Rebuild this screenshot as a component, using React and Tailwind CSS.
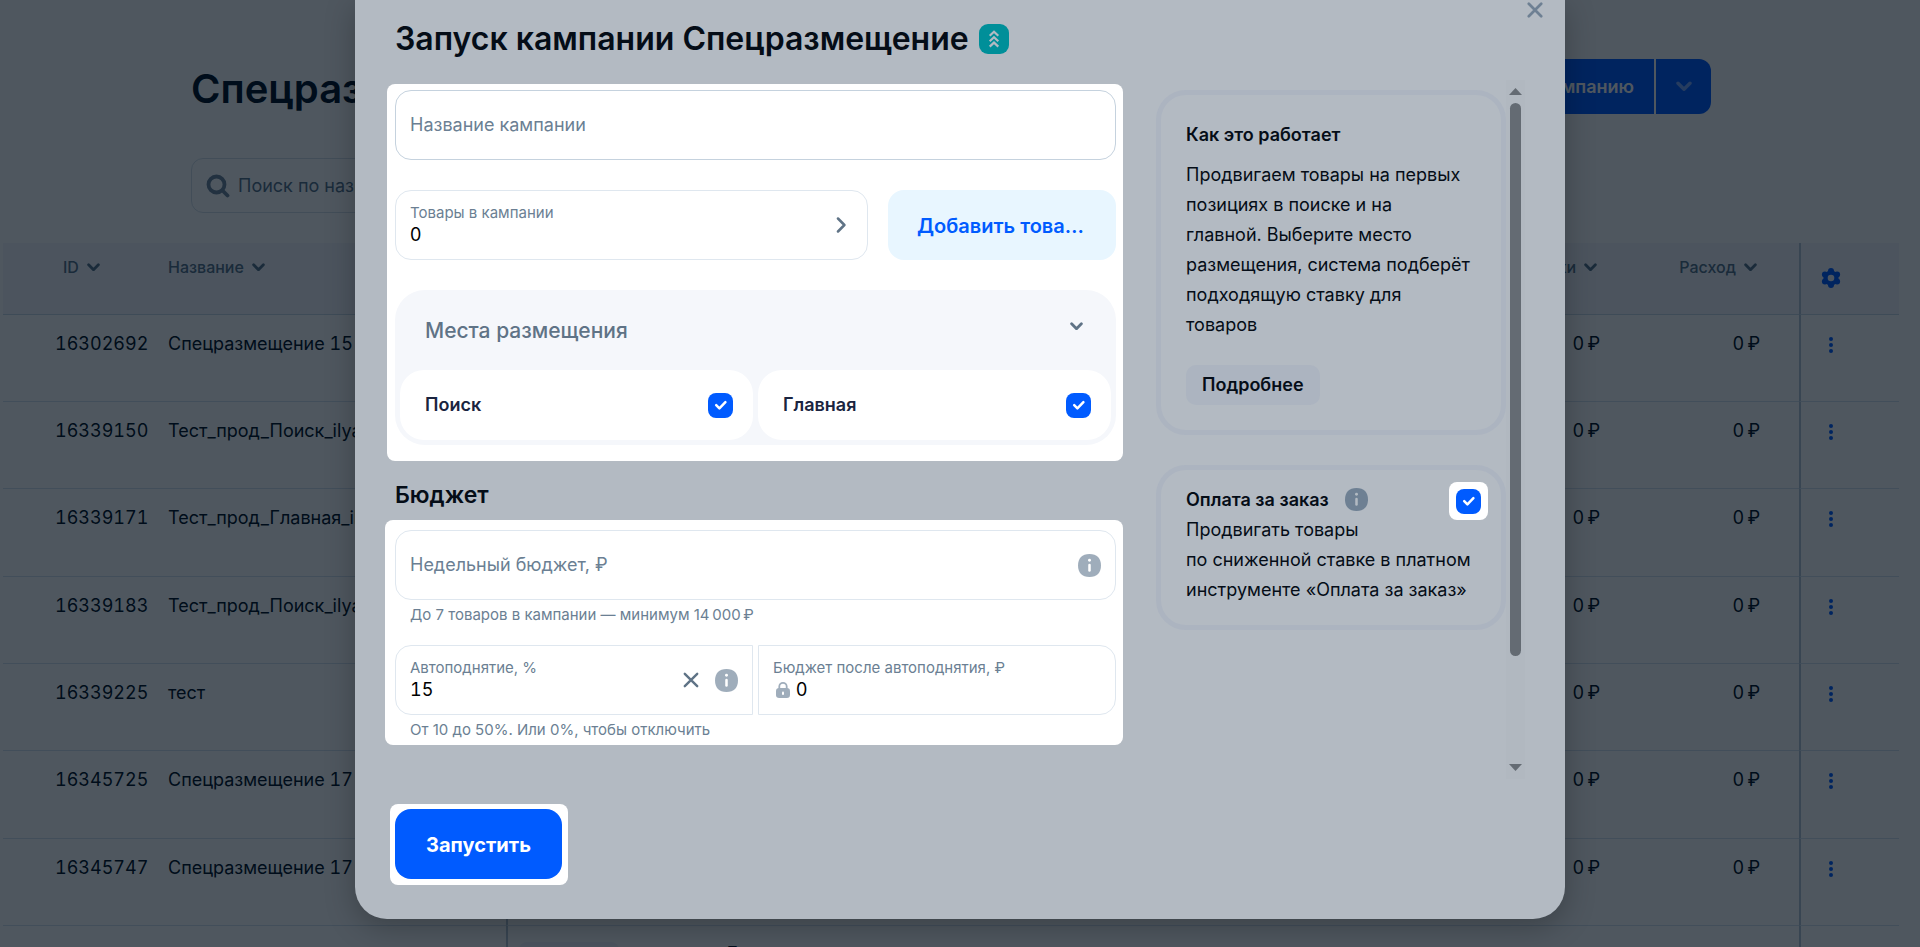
import { useState } from 'react';

const campaigns = [
    { id: '16302692', name: 'Спецразмещение 15 января' },
    { id: '16339150', name: 'Тест_прод_Поиск_ilya' },
    { id: '16339171', name: 'Тест_прод_Главная_ilya' },
    { id: '16339183', name: 'Тест_прод_Поиск_ilya' },
    { id: '16339225', name: 'тест' },
    { id: '16345725', name: 'Спецразмещение 17 января' },
    { id: '16345747', name: 'Спецразмещение 17 января' },
    { id: '16345801', name: 'Спецразмещение 17 января' },
];

function Chevron({ className = '' }) {
    return (
        <svg viewBox="0 0 12 8" className={className} fill="none" stroke="currentColor" strokeWidth="2.6" strokeLinecap="round" strokeLinejoin="round" aria-hidden="true">
            <path d="M1.5 1.7 6 6.2l4.5-4.5" />
        </svg>
    );
}

function Cross({ className = '', strokeWidth = 2 }) {
    return (
        <svg viewBox="0 0 16 16" className={className} fill="none" stroke="currentColor" strokeWidth={strokeWidth} strokeLinecap="round" aria-hidden="true">
            <path d="m1.8 1.8 12.4 12.4M14.2 1.8 1.8 14.2" />
        </svg>
    );
}

function InfoIcon({ className = '', mark = '#ffffff' }) {
    return (
        <svg viewBox="0 0 22 22" className={className} aria-hidden="true">
            <path d="M11 0c7.2 0 11 4.200 11 11s-3.800 11-11 11S0 17.800 0 11 3.800 0 11 0Z" fill="currentColor" />
            <circle cx="11" cy="6" r="1.4" fill={mark} />
            <rect x="9.8" y="9.4" width="2.4" height="7.6" rx="1.2" fill={mark} />
        </svg>
    );
}

function Checkbox({ id, checked, onChange }) {
    return (
        <span className="relative flex size-[25px] shrink-0">
            <input id={id} type="checkbox" checked={checked} onChange={onChange} className="size-full cursor-pointer appearance-none rounded-lg bg-[#c8d2dc] checked:bg-[#005bff]" />
            {checked && (
                <svg viewBox="0 0 25 25" className="pointer-events-none absolute inset-0" fill="none" stroke="#fff" strokeWidth="2.5" strokeLinecap="round" strokeLinejoin="round" aria-hidden="true">
                    <path d="m8.2 12.2 3.2 3.2 6-6.2" />
                </svg>
            )}
        </span>
    );
}

function CampaignsPage() {
    return (
        <div className="h-full overflow-hidden bg-white text-[#001024]">
            <header className="flex h-[158px] items-start justify-between pl-[191px] pr-[209px] pt-[59px]">
                <h1 className="text-[40px] font-semibold leading-[60px]">Спецразмещение</h1>
                <div className="flex gap-[2px] text-white">
                    <button className="h-[55px] rounded-l-xl bg-[#005bff] px-5 text-lg font-semibold">Создать кампанию</button>
                    <button aria-label="Ещё варианты" className="flex h-[55px] w-[55px] items-center justify-center rounded-r-xl bg-[#005bff] text-[#7aa8ff]">
                        <Chevron className="w-4" />
                    </button>
                </div>
            </header>
            <div className="ml-[191px] flex h-[55px] w-[500px] items-center gap-2 rounded-xl border border-[#d5dfe9] px-3.5">
                <svg viewBox="0 0 24 24" className="size-6 text-[#6f859b]" fill="none" stroke="currentColor" strokeWidth="3.8" strokeLinecap="round" aria-hidden="true">
                    <circle cx="10.5" cy="10.5" r="8" />
                    <path d="m17 17 4.5 4.5" />
                </svg>
                <input aria-label="Поиск" placeholder="Поиск по названию" className="flex-1 bg-transparent text-lg outline-none placeholder:text-[#557089]" />
            </div>
            <div className="mt-[30px] pl-[3px] pr-[21px]">
                <table className="w-full table-fixed border-separate border-spacing-0">
                    <colgroup>
                        <col className="w-[165px]" />
                        <col className="w-[338px]" />
                        <col />
                        <col className="w-[160px]" />
                        <col className="w-[160px]" />
                        <col className="w-[100px]" />
                    </colgroup>
                    <thead>
                        <tr className="h-[72px] text-left align-top text-base leading-[48px] text-[#557089] *:whitespace-nowrap *:border-b *:border-b-[#c9d9e6] *:bg-[#f4f6fb] *:p-0 *:font-medium">
                            <th><span className="flex items-center gap-2 pl-[60px]">ID <Chevron className="w-[13px]" /></span></th>
                            <th><span className="flex items-center gap-2">Название <Chevron className="w-[13px]" /></span></th>
                            <th className="border-l-2 border-l-[#b4c6d6]" />
                            <th><span className="flex items-center justify-end gap-2 pr-[42px]">Клики <Chevron className="w-[13px]" /></span></th>
                            <th><span className="flex items-center justify-end gap-2 pr-[42px]">Расход <Chevron className="w-[13px]" /></span></th>
                            <th className="border-l-2 border-l-[#b4c6d6]">
                                <button aria-label="Настройки таблицы" className="ml-5 mt-[25px] flex text-[#005bff]">
                                    <svg viewBox="0 0 20 20" className="size-5" fill="currentColor" aria-hidden="true">
                                        <circle cx="10" cy="10" r="7.6" />
                                        <circle cx="10" cy="3" r="3" />
                                        <circle cx="10" cy="17" r="3" />
                                        <circle cx="3.9" cy="6.5" r="3" />
                                        <circle cx="16.1" cy="6.5" r="3" />
                                        <circle cx="3.9" cy="13.5" r="3" />
                                        <circle cx="16.1" cy="13.5" r="3" />
                                        <circle cx="10" cy="10" r="3.3" fill="#f4f6fb" />
                                    </svg>
                                </button>
                            </th>
                        </tr>
                    </thead>
                    <tbody>
                        {campaigns.map(c => (
                            <tr key={c.id} className="h-[87px] align-top text-lg leading-[30px] tabular-nums nth-[3n]:h-[88px] *:whitespace-nowrap *:border-b *:border-b-[#d5e2ed] *:px-0 *:pb-0 *:pt-[14px]">
                                <td><span className="block pl-[52px]">{c.id}</span></td>
                                <td>{c.name}</td>
                                <td className="border-l-2 border-l-[#b4c6d6]">
                                    <div className="flex pl-[11px] pt-0.5">
                                        <span className="w-[100px] rounded-lg bg-[#f0f3fa] text-center text-base leading-[30px]">Активна</span>
                                        <span className="ml-[108px] font-semibold leading-6">Бюджет</span>
                                    </div>
                                </td>
                                <td><span className="block pr-[39px] text-right">{'0\u2009₽'}</span></td>
                                <td><span className="block pr-[39px] text-right">{'0\u2009₽'}</span></td>
                                <td className="border-l-2 border-l-[#b4c6d6]">
                                    <button aria-label={`Действия ${c.id}`} className="ml-5 flex h-8 w-5 items-center justify-center text-[#005bff]">
                                        <svg viewBox="0 0 4 16" className="h-4 w-1" fill="currentColor" aria-hidden="true">
                                            <circle cx="2" cy="2" r="2" />
                                            <circle cx="2" cy="8" r="2" />
                                            <circle cx="2" cy="14" r="2" />
                                        </svg>
                                    </button>
                                </td>
                            </tr>
                        ))}
                    </tbody>
                </table>
            </div>
        </div>
    );
}

function PlacementOption({ id, label, checked, onChange }) {
    return (
        <div className="flex h-[70px] flex-1 items-center justify-between rounded-3xl bg-white pl-[25px] pr-5">
            <label htmlFor={id} className="text-lg font-semibold text-[#1a2440]">{label}</label>
            <Checkbox id={id} checked={checked} onChange={onChange} />
        </div>
    );
}

function LaunchModal() {
    const [places, setPlaces] = useState({ search: true, main: true });
    const [payPerOrder, setPayPerOrder] = useState(true);
    const [raise, setRaise] = useState('15');

    return (
        <div role="dialog" aria-modal="true" aria-labelledby="launch-title" className="relative w-[1210px] max-w-full rounded-b-[32px] bg-[#b3bac2] px-10 pb-10 text-[#050d17] shadow-[0_8px_30px_rgba(0,0,0,0.25)]">
            <button aria-label="Закрыть" className="absolute right-[22px] top-0.5 text-[#6e8093]">
                <Cross className="size-4" strokeWidth={2.7} />
            </button>
            <div className="flex h-20 items-center gap-2.5 pb-0.5">
                <h2 id="launch-title" className="text-[32px] font-semibold leading-10">Запуск кампании Спецразмещение</h2>
                <svg viewBox="0 0 30 30" className="size-[30px]" aria-hidden="true">
                    <rect width="30" height="30" rx="9" fill="#008f99" />
                    <path d="m10.7 11.8 4.3-4 4.3 4M10.7 17.2l4.3-4 4.3 4M10.7 22.6l4.3-4 4.3 4" fill="none" stroke="#b3bac2" strokeWidth="2.2" />
                </svg>
            </div>

            <div className="flex h-[699px]">
                <div className="min-w-0 flex-1 pt-1">
                    <section className="-ml-2 -mr-[7px] rounded-lg bg-white pb-4 pl-2 pr-[7px] pt-[6px]">
                        <input aria-label="Название кампании" placeholder="Название кампании" className="block h-[70px] w-full rounded-2xl border border-[#c5d2de] px-[14px] pb-[2px] text-lg outline-none placeholder:text-[#6b7f93]" />
                        <div className="mt-[30px] flex gap-5">
                            <button className="flex h-[70px] flex-1 items-center justify-between rounded-2xl border border-[#dfe7ef] pl-[14px] pr-[21px] text-left">
                                <span className="block pb-0.5">
                                    <span className="block text-[15px] leading-[22px] text-[#6b7f93]">Товары в кампании</span>
                                    <span className="block text-lg leading-[22px] text-black">0</span>
                                </span>
                                <svg viewBox="0 0 10 16" className="h-4 w-2.5 text-[#5f7386]" fill="none" stroke="currentColor" strokeWidth="2.5" strokeLinecap="round" strokeLinejoin="round" aria-hidden="true">
                                    <path d="m2 1.5 6.4 6.5L2 14.5" />
                                </svg>
                            </button>
                            <button className="h-[70px] w-[228px] truncate rounded-2xl bg-[#e8f6ff] px-[29px] pt-0.5 text-xl font-semibold text-[#005bff]">Добавить товары</button>
                        </div>
                        <div className="mt-[30px] rounded-[30px] bg-[#f5f7fb] px-[5px] pb-[5px]">
                            <button className="flex h-20 w-full items-center justify-between pl-[25px] pr-7 text-[#5f7386]">
                                <span className="pt-0.5 text-[21px] font-medium">Места размещения</span>
                                <Chevron className="mb-2 w-[13px]" />
                            </button>
                            <div className="flex gap-[5px]">
                                <PlacementOption id="place-search" label="Поиск" checked={places.search} onChange={e => setPlaces({ ...places, search: e.target.checked })} />
                                <PlacementOption id="place-main" label="Главная" checked={places.main} onChange={e => setPlaces({ ...places, main: e.target.checked })} />
                            </div>
                        </div>
                    </section>

                    <h3 className="pb-[9px] pt-[18px] text-[23px] font-semibold leading-8">Бюджет</h3>

                    <section className="-ml-2.5 -mr-[7px] rounded-lg bg-white pb-1 pl-2.5 pr-[7px] pt-2.5">
                        <div className="flex h-[70px] items-center rounded-2xl border border-[#dfe7ef] px-[14px]">
                            <input aria-label="Недельный бюджет, ₽" placeholder="Недельный бюджет, ₽" className="min-w-0 flex-1 text-lg outline-none placeholder:text-[#6b7f93]" />
                            <InfoIcon className="size-[23px] text-[#9fadbb]" />
                        </div>
                        <p className="pl-[15px] pt-1 text-[15px] leading-[22px] text-[#6b7f93]">{'До 7 товаров в кампании — минимум 14\u2009000\u2009₽'}</p>
                        <div className="mt-[19px] flex gap-[5px]">
                            <div className="flex h-[70px] flex-1 items-center rounded-l-2xl border border-[#dfe7ef] px-[14px]">
                                <div className="min-w-0 flex-1 pb-0.5">
                                    <label htmlFor="raise" className="block text-[15px] leading-[22px] text-[#6b7f93]">Автоподнятие, %</label>
                                    <input id="raise" value={raise} onChange={e => setRaise(e.target.value)} className="block h-[22px] w-full text-lg tabular-nums text-black outline-none" />
                                </div>
                                <button aria-label="Очистить" onClick={() => setRaise('')} className="mr-4 text-[#5f7386]">
                                    <Cross className="size-4" strokeWidth={2.4} />
                                </button>
                                <InfoIcon className="size-[23px] text-[#9fadbb]" />
                            </div>
                            <div className="flex h-[70px] flex-1 flex-col justify-center rounded-r-2xl border border-[#dfe7ef] px-[14px] pb-0.5">
                                <label htmlFor="after" className="block text-[15px] leading-[22px] text-[#6b7f93]">Бюджет после автоподнятия, ₽</label>
                                <div className="flex items-center gap-1.5 pl-[3px]">
                                    <svg viewBox="0 0 14 16" className="h-4 w-3.5 text-[#9fadbb]" aria-hidden="true">
                                        <path d="M3.3 8V4.6a3.7 3.7 0 0 1 7.4 0V8" fill="none" stroke="currentColor" strokeWidth="1.8" />
                                        <rect y="6" width="14" height="10" rx="3.2" fill="currentColor" />
                                        <rect x="6" y="9.5" width="2" height="3.5" rx="1" fill="#fff" />
                                    </svg>
                                    <input id="after" value="0" readOnly className="block h-[22px] min-w-0 flex-1 text-lg text-black outline-none" />
                                </div>
                            </div>
                        </div>
                        <p className="pl-[15px] pt-1 text-[15px] leading-[22px] text-[#6b7f93]">От 10 до 50%. Или 0%, чтобы отключить</p>
                    </section>
                </div>

                <aside className="ml-10 w-[350px] shrink-0 pt-2.5 text-lg leading-[30px]">
                    <section className="rounded-[30px] border-[5px] border-[#acb4c0] p-[25px]">
                        <h4 className="font-semibold">Как это работает</h4>
                        <p className="-mr-2 mt-2.5">Продвигаем товары на первых<br />позициях в поиске и на<br />главной. Выберите место<br />размещения, система подберёт<br />подходящую ставку для<br />товаров</p>
                        <button className="mt-[25px] h-10 rounded-[10px] bg-[#acb4c0] px-4 font-semibold">Подробнее</button>
                    </section>
                    <section className="mt-[30px] rounded-[30px] border-[5px] border-[#acb4c0] pb-5 pl-[25px] pr-[13px] pt-3">
                        <div className="flex h-[38px] items-center">
                            <label htmlFor="pay-order" className="pb-[3px] font-semibold">Оплата за заказ</label>
                            <InfoIcon className="mb-[3px] ml-4 size-[23px] text-[#6e8093]" mark="#b3bac2" />
                            <span className="ml-auto flex h-[38px] w-[39px] items-center justify-center rounded-lg bg-white">
                                <Checkbox id="pay-order" checked={payPerOrder} onChange={e => setPayPerOrder(e.target.checked)} />
                            </span>
                        </div>
                        <p className="-mt-[5px]">Продвигать товары<br />по сниженной ставке в платном<br />инструменте «Оплата за заказ»</p>
                    </section>
                </aside>

                <div className="flex w-[19px] shrink-0 flex-col items-center bg-[#b1b8c0] py-2 text-[#646b73]">
                    <svg viewBox="0 0 13 7" className="w-[13px]" fill="currentColor" aria-hidden="true"><path d="M6.5 0 13 7H0z" /></svg>
                    <div className="mt-2 h-[553px] w-[11px] rounded-full bg-[#646b73]" />
                    <svg viewBox="0 0 13 7" className="mt-auto w-[13px]" fill="currentColor" aria-hidden="true"><path d="M0 0h13L6.5 7z" /></svg>
                </div>
            </div>

            <div className="-mb-1.5 -ml-[5px] mt-[25px] w-fit rounded-lg bg-white pb-1.5 pl-[5px] pr-1.5 pt-[5px]">
                <button className="h-[70px] w-[167px] rounded-2xl bg-[#005bff] pt-0.5 text-xl font-bold text-white">Запустить</button>
            </div>
        </div>
    );
}

export default function App() {
    return (
        <div className="relative h-screen overflow-hidden font-['Inter','Noto_Sans',sans-serif]">
            <CampaignsPage />
            <div className="absolute inset-0 flex items-start justify-center overflow-hidden bg-[#000b17]/69">
                <LaunchModal />
            </div>
        </div>
    );
}
